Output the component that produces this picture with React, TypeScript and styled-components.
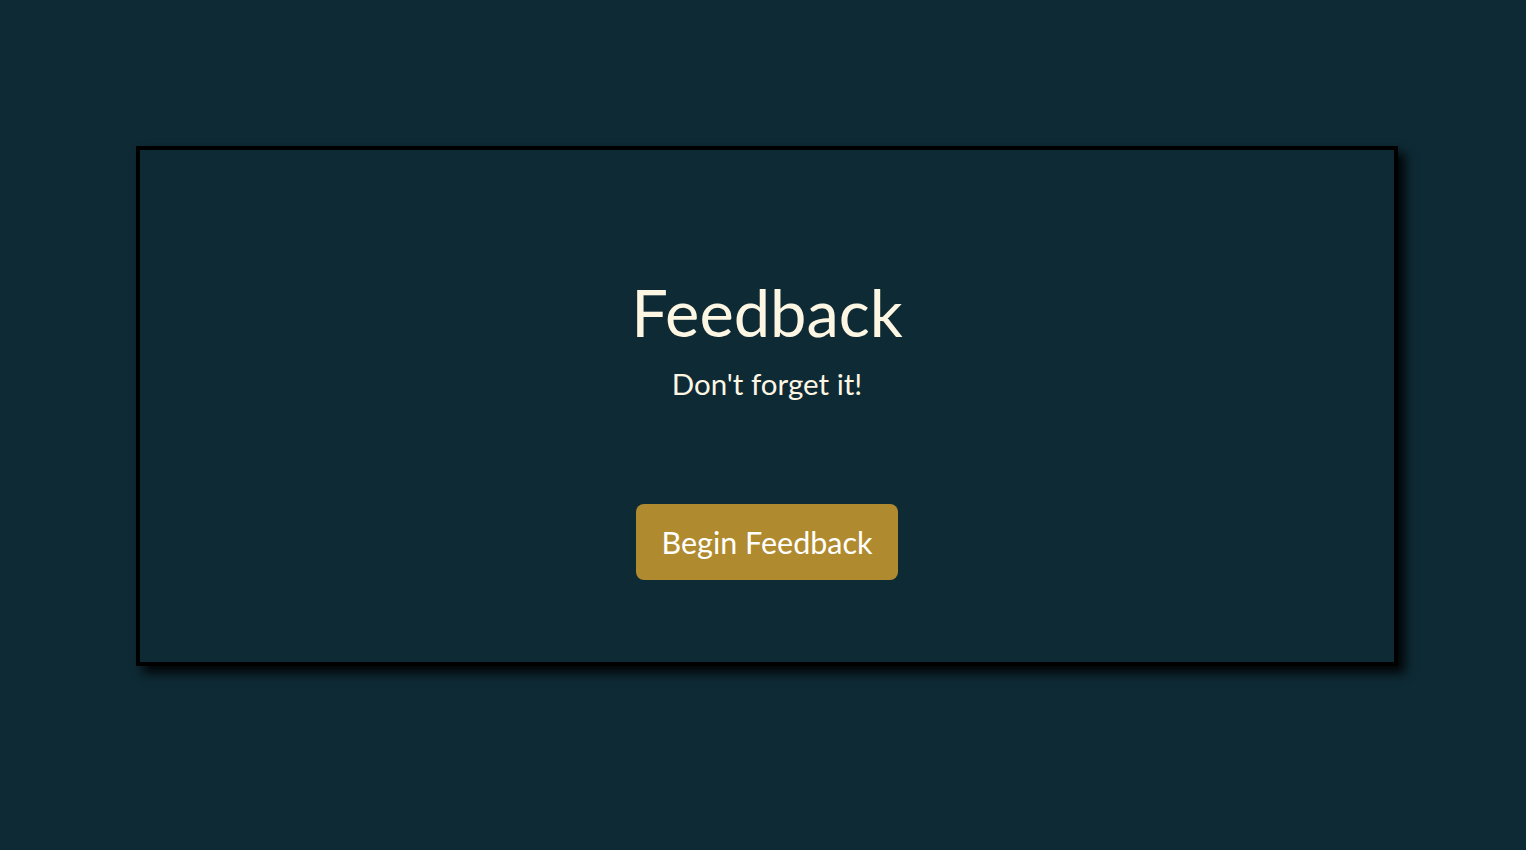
import React from "react";
import styled, { createGlobalStyle } from "styled-components";

const Global = createGlobalStyle`
  html, body {
    margin: 0;
    padding: 0;
    background: #0e2a35;
  }
  body {
    font-family: "Lato", "Noto Sans", "Liberation Sans", sans-serif;
  }
`;

const Page = styled.main`
  box-sizing: border-box;
  min-height: 850px;
  padding: 146px 128px 0 136px;
`;

const Card = styled.section`
  box-sizing: border-box;
  height: 520px;
  border: 4px solid #000;
  box-shadow: 7px 7px 10px rgba(0, 0, 0, 0.9);
  display: flex;
  flex-direction: column;
  align-items: center;
  padding-top: 124px;
`;

const Title = styled.h1`
  margin: 0;
  font-weight: 400;
  font-size: 65px;
  line-height: 76px;
  color: #fdf6e3;
`;

const Subtitle = styled.p`
  margin: 14px 0 0;
  font-size: 29.5px;
  line-height: 40px;
  color: #fdf6e3;
`;

const Button = styled.button`
  margin-top: 100px;
  width: 262px;
  height: 76px;
  border: none;
  border-radius: 8px;
  background: #b08a2e;
  color: #ffffff;
  font-family: inherit;
  font-size: 30.5px;
  cursor: pointer;
`;

export default function App() {
  return (
    <>
      <Global />
      <Page>
        <Card>
          <Title>Feedback</Title>
          <Subtitle>Don't forget it!</Subtitle>
          <Button>Begin Feedback</Button>
        </Card>
      </Page>
    </>
  );
}
